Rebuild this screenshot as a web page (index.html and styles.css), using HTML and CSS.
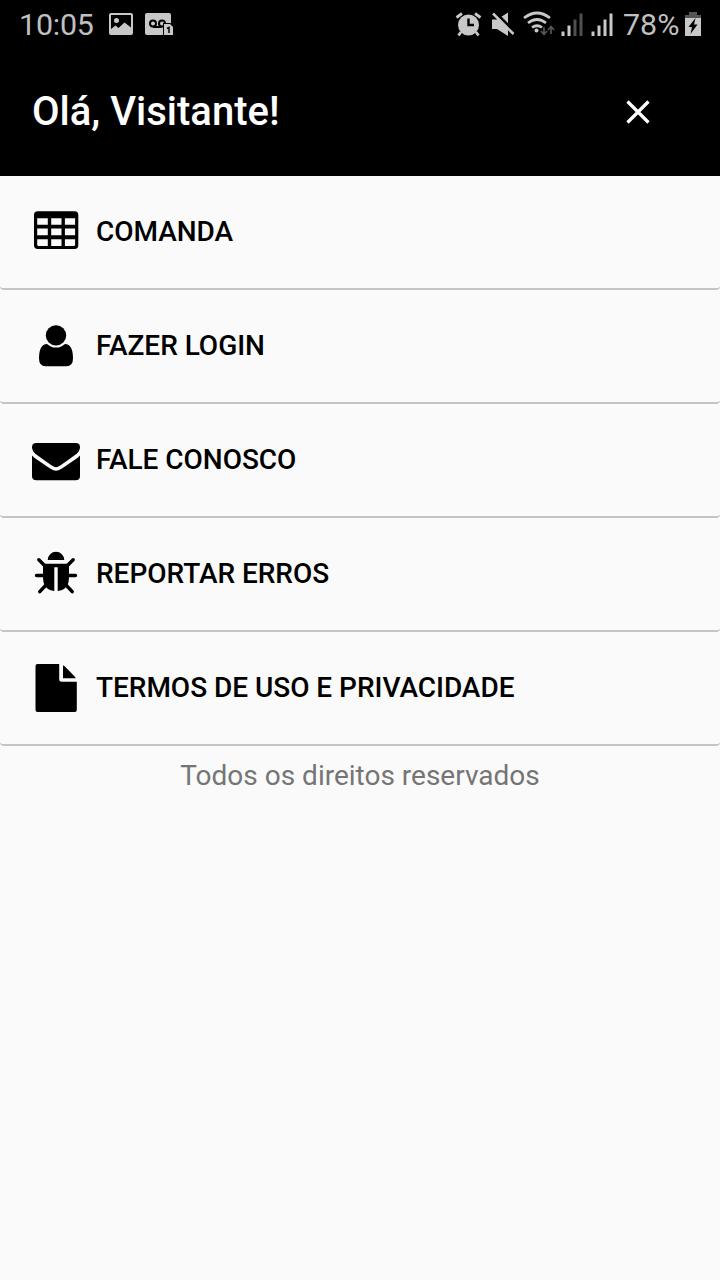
FILE: index.html
```html
<!DOCTYPE html>
<html lang="pt-BR">
<head>
<meta charset="utf-8">
<title>Menu</title>
<link rel="stylesheet" href="styles.css">
</head>
<body>
<header class="top">
  <div class="status">
    <span class="clock">10:05</span>
    <svg class="status-left" width="70" height="50" viewBox="105 0 70 50">
      <path fill-rule="evenodd" d="M111 13h20q2 0 2 2v18q0 2-2 2h-20q-2 0-2-2V15q0-2 2-2zM111 15v14l4.500-3.500 3 2.500 6-5.500 6.500 5V15z"/>
      <circle cx="116.500" cy="20.500" r="2.500"/>
      <path d="M147 13h22q2 0 2 2v20h-24q-2 0-2-2V15q0-2 2-2z"/>
      <g fill="none" stroke="#000" stroke-width="2"><circle cx="153" cy="23.500" r="3"/><circle cx="162" cy="23.500" r="3"/><path d="M153 27h9"/></g>
      <path d="M164 24h6l3 3v8h-9z" stroke="#000" stroke-width="2" paint-order="stroke"/>
      <path d="M167 28.500l2-1V33" fill="none" stroke="#000" stroke-width="1.500"/>
    </svg>
    <svg class="status-right" width="165" height="50" viewBox="455 0 165 50">
      <circle cx="468.500" cy="25" r="10.500"/>
      <path d="M456.500 17.500l5.500-4M480.500 17.500l-5.500-4M461 32l-2.500 3.500M476 32l2.500 3.500" fill="none" stroke="#c8c8c8" stroke-width="2.800"/>
      <path d="M468.500 18.500V25H474" fill="none" stroke="#000" stroke-width="2.400"/>
      <path d="M492 19.500h5l11-7v23.500l-11-7h-5z"/>
      <path d="M494.500 11.500l20 20.500" stroke="#000" stroke-width="3"/>
      <path d="M493 13.500l20.500 20.500" stroke="#c8c8c8" stroke-width="2.600"/>
      <g fill="none" stroke="#c8c8c8" stroke-width="2.700"><path d="M524 18q13-10 26 0M528 23q9-7 18 0M532 27.500q5-3.500 10 0"/></g>
      <circle cx="536.500" cy="30.500" r="2"/>
      <g fill="none" stroke="#555" stroke-width="1.700"><path d="M544 27v7M541 31l3 3.500 3-3.500M551 34v-7M548 30l3-3.500 3 3.500"/></g>
      <path d="M561.500 31.500h3V36h-3zM567.500 25.500h3V36h-3z"/>
      <path fill="#505050" d="M573.500 19.500h3V36h-3zM579.500 13.500h3V36h-3z"/>
      <path d="M591.500 31.500h3V36h-3zM597.500 25.500h3V36h-3zM603.500 19.500h3V36h-3zM609.500 13.500h3V36h-3z"/>
    </svg>
    <span class="percent">78%</span>
    <svg class="battery" width="18" height="50" viewBox="684 0 18 50">
      <path fill="#555" d="M689 12h8v3h4v3.500h-16V15h4z"/>
      <path d="M685 18h16v18h-16z"/>
      <path fill="#000" d="M695.500 18l-7 9h3.500l-1.500 7 7-9.500h-3.500z"/>
    </svg>
  </div>
  <div class="greeting">
    <h1 class="title">Olá, Visitante!</h1>
    <svg class="close" width="28" height="28" viewBox="0 0 28 28"><path d="M3.500 3.500l21 21M24.500 3.500l-21 21"/></svg>
  </div>
</header>
<nav class="menu">
  <a class="item"><svg class="icon" viewBox="0 0 48 56"><path fill-rule="evenodd" d="M5.700 7.300h36.900q3.700 0 3.700 3.700v30.300q0 3.700-3.700 3.700H5.700Q2 45 2 41.300V11q0-3.700 3.700-3.700zM5.200 14.200v6.600h10.600v-6.600zM19.200 14.200v6.600h10.300v-6.600zM32.900 14.200v6.600h10.200v-6.600zM5.200 24.600v6.600h10.600v-6.600zM19.200 24.600v6.600h10.300v-6.600zM32.900 24.600v6.600h10.200v-6.600zM5.200 35.200v5.900l.8.800h9.800v-6.700zM19.200 35.200v6.700h10.300v-6.700zM32.900 35.200v6.700h9.400l.8-.8v-5.900z"/></svg><span class="label">COMANDA</span></a>
  <a class="item"><svg class="icon" viewBox="0 0 48 56"><circle cx="24" cy="17.400" r="10.200"/><path d="M15 25.900q4 3.700 9 3.700t9-3.700q8 .5 8 14.300 0 8-6.500 8h-21Q7 48.200 7 40.200q0-13.800 8-14.300z"/></svg><span class="label">FAZER LOGIN</span></a>
  <a class="item"><svg class="icon" viewBox="0 0 48 56"><path d="M4.500 11h39q4.500 0 4.500 4.200 0 4.200-5 7.800L29 33q-3.500 2.300-5 2.300T19 33L5 23q-5-3.600-5-7.800Q0 11 4.500 11z"/><path d="M0 23.500q1 1.300 3 2.700L18 36.500q4 2.300 6 2.300t6-2.300l15-10.300q2-1.400 3-2.700V44q0 4.300-4.500 4.300h-39Q0 48.300 0 44z"/></svg><span class="label">FALE CONOSCO</span></a>
  <a class="item"><svg class="icon" viewBox="0 0 48 56"><path d="M15.700 14a8.300 8.300 0 0 1 16.600 0z"/><path d="M11 17.700h26V31q0 13-11.300 14V21.300h-3.400V45Q11 44 11 31z"/><path d="M6.800 13.700l6 6M41.200 13.700l-6 6M4.500 29.500H12M43.500 29.500H36M7.800 45.700l6.200-6.700M40.200 45.700L34 39" fill="none" stroke="#000" stroke-width="3.400" stroke-linecap="round"/></svg><span class="label">REPORTAR ERROS</span></a>
  <a class="item"><svg class="icon" viewBox="0 0 48 56"><path d="M5.500 4h21.700v15.200q0 2.500 2.600 2.500h15v28.300q0 2-2 2H5.500q-2 0-2-2V6q0-2 2-2z"/><path d="M31 5.200q.8.300 1.400.9l10.300 10.300q.7.700 1 1.800H31z"/></svg><span class="label">TERMOS DE USO E PRIVACIDADE</span></a>
</nav>
<footer class="rights">Todos os direitos reservados</footer>
</body>
</html>
```
FILE: styles.css
```css
body {
  margin: 0;
  min-height: 1280px;
  background: #fafafa;
  font-family: Roboto, "Liberation Sans", sans-serif;
}
.top {
  height: 176px;
  background: #000;
  color: #fff;
}
.status {
  display: flex;
  height: 50px;
  line-height: 50px;
  color: #c0c0c0;
  fill: #c8c8c8;
  font-size: 30.4px;
}
.clock {
  width: 86px;
  padding-left: 19px;
  letter-spacing: -0.2px;
}
.status-right {
  margin-left: auto;
}
.percent {
  padding-left: 3px;
  width: 61px;
}
.battery {
  margin-right: 18px;
}
.greeting {
  display: flex;
  align-items: center;
  justify-content: space-between;
  height: 124px;
  padding: 0 68px 0 32px;
}
.title {
  margin: 0 0 1px;
  font-size: 40px;
  font-weight: 500;
}
.close {
  fill: none;
  stroke: #fff;
  stroke-width: 3.2;
}
.item {
  display: flex;
  align-items: center;
  gap: 16px;
  height: 112px;
  padding: 0 32px;
  border-bottom: 2px solid #c4c4c4;
  border-radius: 0 0 4px 4px;
}
.icon {
  width: 48px;
  height: 56px;
}
.label {
  margin-bottom: 2px;
  font-size: 28px;
  font-weight: 500;
  letter-spacing: -0.03px;
  color: #000;
}
.rights {
  margin-top: 13px;
  text-align: center;
  font-size: 28px;
  line-height: 33px;
  color: #757575;
}
```
